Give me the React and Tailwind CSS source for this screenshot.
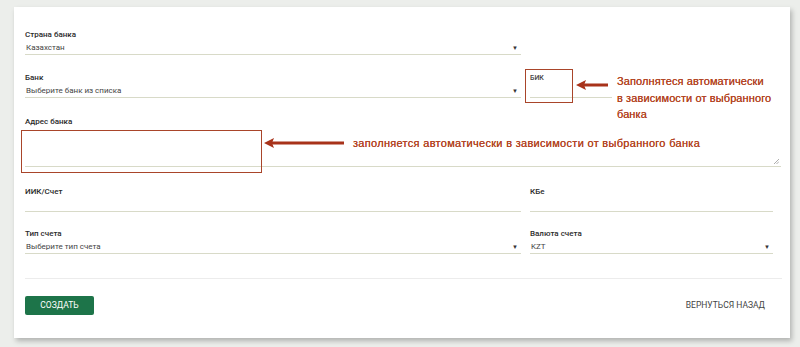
import React from 'react';

const font = { fontFamily: '"Liberation Sans", Arial, sans-serif' };

function Label({ children }) {
  return <div className="font-['Roboto',sans-serif] text-[8px] leading-[10px] font-medium text-[#2a2a2a]">{children}</div>;
}

function SelectField({ label, value, width }) {
  return (
    <div className={width}>
      <Label>{label}</Label>
      <div className="mt-[2px] flex h-[13px] items-center justify-between border-b border-[#d8dac8] pl-px pb-px">
        <span className="font-['Roboto',sans-serif] text-[8px] leading-[10px] text-[#444]">{value}</span>
        <span className="pr-[3px] text-[6px] leading-[8px] text-[#333]">▼</span>
      </div>
    </div>
  );
}

function InputField({ label, width }) {
  return (
    <div className={width}>
      <Label>{label}</Label>
      <div className="mt-[4px] h-[11px] border-b border-[#d8dac8]" />
    </div>
  );
}

function Arrow({ width }) {
  return (
    <svg width={width} height="12" viewBox={`0 0 ${width} 12`}>
      <rect x="8" y="4.5" width={width - 8} height="3" fill="#a8321a" />
      <path d="M0 6 L10 1 L8 6 L10 11 Z" fill="#a8321a" />
    </svg>
  );
}

export default function App() {
  return (
    <div className="h-[347px] w-[800px] overflow-hidden bg-[#eceeeb] pt-[7px] pl-[14px]" style={font}>
      <div className="relative h-[331px] w-[776px] bg-white pl-[11px] pt-[23px] shadow-[2px_3px_5px_rgba(0,0,0,0.25)]">
        {/* Страна банка */}
        <SelectField label="Страна банка" value="Казахстан" width="w-[496px]" />

        {/* Банк + БИК */}
        <div className="mt-[18px] flex gap-[9px]">
          <SelectField label="Банк" value="Выберите банк из списка" width="w-[496px]" />
          <div className="w-[243px] pt-px">
            <div className="font-['Roboto',sans-serif] text-[7px] leading-[9px] font-medium text-[#444]">БИК</div>
            <div className="mt-[4px] h-[11px] w-[82px] border-b border-[#d8dac8]" />
          </div>
        </div>

        {/* Адрес банка */}
        <div className="mt-[19px]">
          <Label>Адрес банка</Label>
          <div className="relative h-[40px] w-[756px] border-b border-[#d8dac8]">
            <svg className="absolute right-[2px] bottom-[2px]" width="6" height="6" viewBox="0 0 6 6">
              <path d="M1 6 L6 1 M3.5 6 L6 3.5" stroke="#999" strokeWidth="0.8" />
            </svg>
          </div>
        </div>

        {/* ИИК / КБе */}
        <div className="mt-[20px] flex gap-[9px]">
          <InputField label="ИИК/Счет" width="w-[496px]" />
          <InputField label="КБе" width="w-[243px]" />
        </div>

        {/* Тип счета / Валюта */}
        <div className="mt-[17px] flex gap-[9px]">
          <SelectField label="Тип счета" value="Выберите тип счета" width="w-[496px]" />
          <SelectField label="Валюта счета" value="KZT" width="w-[243px]" />
        </div>

        <div className="mt-[24px] w-[757px] border-t border-[#ececec]" />

        <div className="mt-[17px] flex w-[740px] items-center justify-between font-['Roboto',sans-serif]">
          <button className="h-[19px] w-[69px] rounded-[2px] bg-[#1d7449] text-[8.5px] text-white">СОЗДАТЬ</button>
          <span className="text-[8.5px] text-[#444]">ВЕРНУТЬСЯ НАЗАД</span>
        </div>

        {/* annotations */}
        <div className="absolute left-[511px] top-[62px] h-[34px] w-[48px] border-[1.5px] border-[#a9452a]" />
        <div className="absolute left-[562px] top-[72px]">
          <Arrow width={32} />
        </div>
        <div className="absolute left-[603px] top-[66px] text-[11px] leading-[16.5px] tracking-[0.1px] text-[#b24424] [text-shadow:0_0_0.4px_#b24424]">
          <div>Заполнятеся автоматически</div>
          <div>в зависимости от выбранного</div>
          <div>банка</div>
        </div>

        <div className="absolute left-[7px] top-[123px] h-[43px] w-[241px] border-[1.5px] border-[#a9452a]" />
        <div className="absolute left-[250px] top-[130px]">
          <Arrow width={80} />
        </div>
        <div className="absolute left-[339px] top-[128px] text-[11px] leading-[16px] tracking-[0.3px] text-[#b24424] [text-shadow:0_0_0.4px_#b24424]">
          заполняется автоматически в зависимости от выбранного банка
        </div>
      </div>
    </div>
  );
}
